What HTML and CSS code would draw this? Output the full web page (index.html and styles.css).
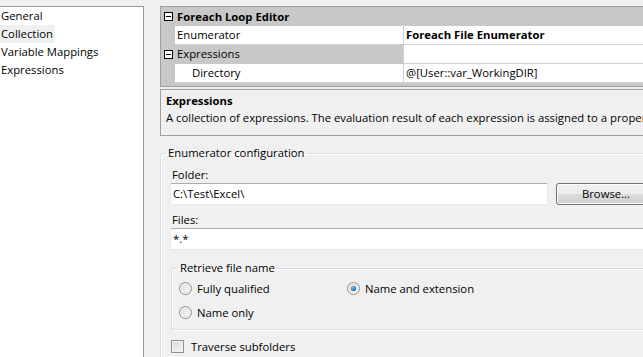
FILE: index.html
```html
<!DOCTYPE html>
<html>
<head>
<meta charset="utf-8">
<link rel="stylesheet" href="styles.css">
</head>
<body>
<div class="window">
  <ul class="nav">
    <li><span>General</span></li>
    <li><span class="sel">Collection</span></li>
    <li><span>Variable Mappings</span></li>
    <li><span>Expressions</span></li>
  </ul>
  <div class="main">
    <div class="grid">
      <div class="row cat">
        <span class="margin"><span class="minus"></span></span>
        <span class="cname bold">Foreach Loop Editor</span>
      </div>
      <div class="row">
        <span class="margin"></span>
        <span class="name">Enumerator</span>
        <span class="value bold">Foreach File Enumerator</span>
      </div>
      <div class="row parent">
        <span class="margin"><span class="minus"></span></span>
        <span class="name">Expressions</span>
        <span class="value"></span>
      </div>
      <div class="row">
        <span class="margin"></span>
        <span class="name indent">Directory</span>
        <span class="value">@[User::var_WorkingDIR]</span>
      </div>
    </div>
    <div class="desc">
      <div class="bold">Expressions</div>
      <div class="desc-text">A collection of expressions. The evaluation result of each expression is assigned to a property.</div>
    </div>
    <fieldset class="group outer">
      <legend>Enumerator configuration</legend>
      <div class="label">Folder:</div>
      <div class="folder-row">
        <div class="textbox folder">C:\Test\Excel\</div>
        <div class="button">Browse...</div>
      </div>
      <div class="label files-label">Files:</div>
      <div class="textbox files">*.*</div>
      <fieldset class="group inner">
        <legend>Retrieve file name</legend>
        <div class="radios">
          <div class="opt"><span class="radio"></span>Fully qualified</div>
          <div class="opt"><span class="radio checked"></span>Name and extension</div>
          <div class="opt"><span class="radio"></span>Name only</div>
        </div>
      </fieldset>
      <div class="check-row"><span class="checkbox"></span>Traverse subfolders</div>
    </fieldset>
  </div>
</div>
</body>
</html>
```

FILE: styles.css
```css
html, body {
  margin: 0;
  padding: 0;
  background: #f0f0f0;
  overflow: hidden;
}
body {
  width: 643px;
  height: 357px;
  font-family: "Open Sans", "Noto Sans", sans-serif;
  font-size: 11.3px;
  color: #000;
}
.bold { font-weight: 700; }

.window {
  display: flex;
  align-items: flex-start;
  padding-top: 6px;
  gap: 16px;
}

.nav {
  list-style: none;
  margin: 0;
  padding: 0;
  width: 143px;
  flex: none;
  background: #fff;
  border-top: 1px solid #999;
  border-right: 1px solid #999;
  height: 360px;
}
.nav li {
  height: 18px;
  line-height: 18px;
}
.nav li span {
  display: inline-block;
  padding: 0 2px 0 1px;
}
.nav li .sel { background: #f0f0f0; }

.main {
  width: 520px;
  flex: none;
  display: flex;
  flex-direction: column;
}
.main > * { flex-shrink: 0; }

.grid {
  border: 1px solid #a0a0a0;
  background: #c8c8c8;
  padding-bottom: 3px;
}
.row {
  display: grid;
  grid-template-columns: 14px 229px 1fr;
  height: 19px;
  line-height: 18px;
}
.row.cat {
  grid-template-columns: 14px 1fr;
}
.margin {
  display: flex;
  align-items: center;
  justify-content: center;
  background: #c8c8c8;
  padding-left: 1px;
}
.minus {
  width: 7px;
  height: 7px;
  border: 1px solid #000;
  background: #fff;
  position: relative;
}
.minus::after {
  content: "";
  position: absolute;
  left: 1px;
  right: 1px;
  top: 3px;
  height: 1px;
  background: #000;
}
.cname {
  padding-left: 2px;
  line-height: 19px;
}
.name {
  padding-left: 2px;
  background: #fff;
  border-right: 1px solid #d0d0d0;
  border-bottom: 1px solid #d0d0d0;
}
.name.indent { padding-left: 17px; }
.row.parent .name { background: #c8c8c8; border-bottom-color: #c8c8c8; }
.value {
  padding-left: 2px;
  background: #fff;
  border-bottom: 1px solid #d0d0d0;
}

.desc {
  margin-top: 2px;
  border: 1px solid #a0a0a0;
  padding: 3px 0 0 5px;
  height: 42px;
  white-space: nowrap;
  overflow: hidden;
  line-height: 16px;
}
.desc-text { margin-top: 1px; }

.group {
  border: 1px solid #d5dfe5;
  border-radius: 3px;
  box-shadow: inset 1px 1px 0 #fff, 1px 1px 0 #fff;
  margin: 0;
  min-width: 0;
}
.group legend {
  line-height: 16px;
  padding: 0 2px;
}
.outer {
  margin-top: 9px;
  padding: 6px 0 20px 9px;
  border-right: none;
}
.outer > legend { margin-left: -4px; }

.label {
  line-height: 16px;
  padding-left: 2px;
}
.folder-row {
  display: flex;
  gap: 8px;
}
.textbox {
  height: 20px;
  line-height: 20px;
  padding-left: 2px;
  background: #fff;
  border: 1px solid #e3e9ef;
  border-top-color: #abadb3;
  border-radius: 2px;
}
.folder {
  width: 374px;
  flex: none;
}
.button {
  width: 98px;
  height: 20px;
  line-height: 20px;
  flex: none;
  text-align: center;
  border: 1px solid #707070;
  border-radius: 3px;
  background: linear-gradient(#f2f2f2 0%, #ebebeb 50%, #dddddd 51%, #cfcfcf 100%);
  box-shadow: inset 0 0 0 1px #fcfcfc;
}
.files-label { margin-top: 7px; }

.inner {
  margin: 10px 0 0 1px;
  padding: 2px 0 7px 7px;
  border-right: none;
}
.inner > legend { margin-left: -1px; }
.radios {
  display: grid;
  grid-template-columns: 168px auto;
  row-gap: 4px;
}
.opt {
  display: flex;
  align-items: center;
  gap: 5px;
  height: 20px;
}
.radio {
  width: 11px;
  height: 11px;
  border-radius: 50%;
  border: 1px solid #8e8f8f;
  background: radial-gradient(circle at 60% 60%, #f4f4f4 0%, #dcdcdc 70%, #cfcfcf 100%);
  box-shadow: inset 0 0 0 1px #f6f6f6;
  display: flex;
  align-items: center;
  justify-content: center;
  flex: none;
}
.radio.checked::after {
  content: "";
  width: 5px;
  height: 5px;
  border-radius: 50%;
  background: radial-gradient(circle at 40% 35%, #7cc4f0 0%, #2a78b8 55%, #0c3e6a 100%);
}
.check-row {
  margin-top: 8px;
  display: flex;
  align-items: center;
  gap: 7px;
  height: 16px;
  padding-left: 1px;
}
.checkbox {
  width: 11px;
  height: 11px;
  border: 1px solid #8e8f8f;
  background: linear-gradient(135deg, #d8d8d8, #f6f6f6);
  box-shadow: inset 0 0 0 1px #f4f4f4;
  flex: none;
}
```
